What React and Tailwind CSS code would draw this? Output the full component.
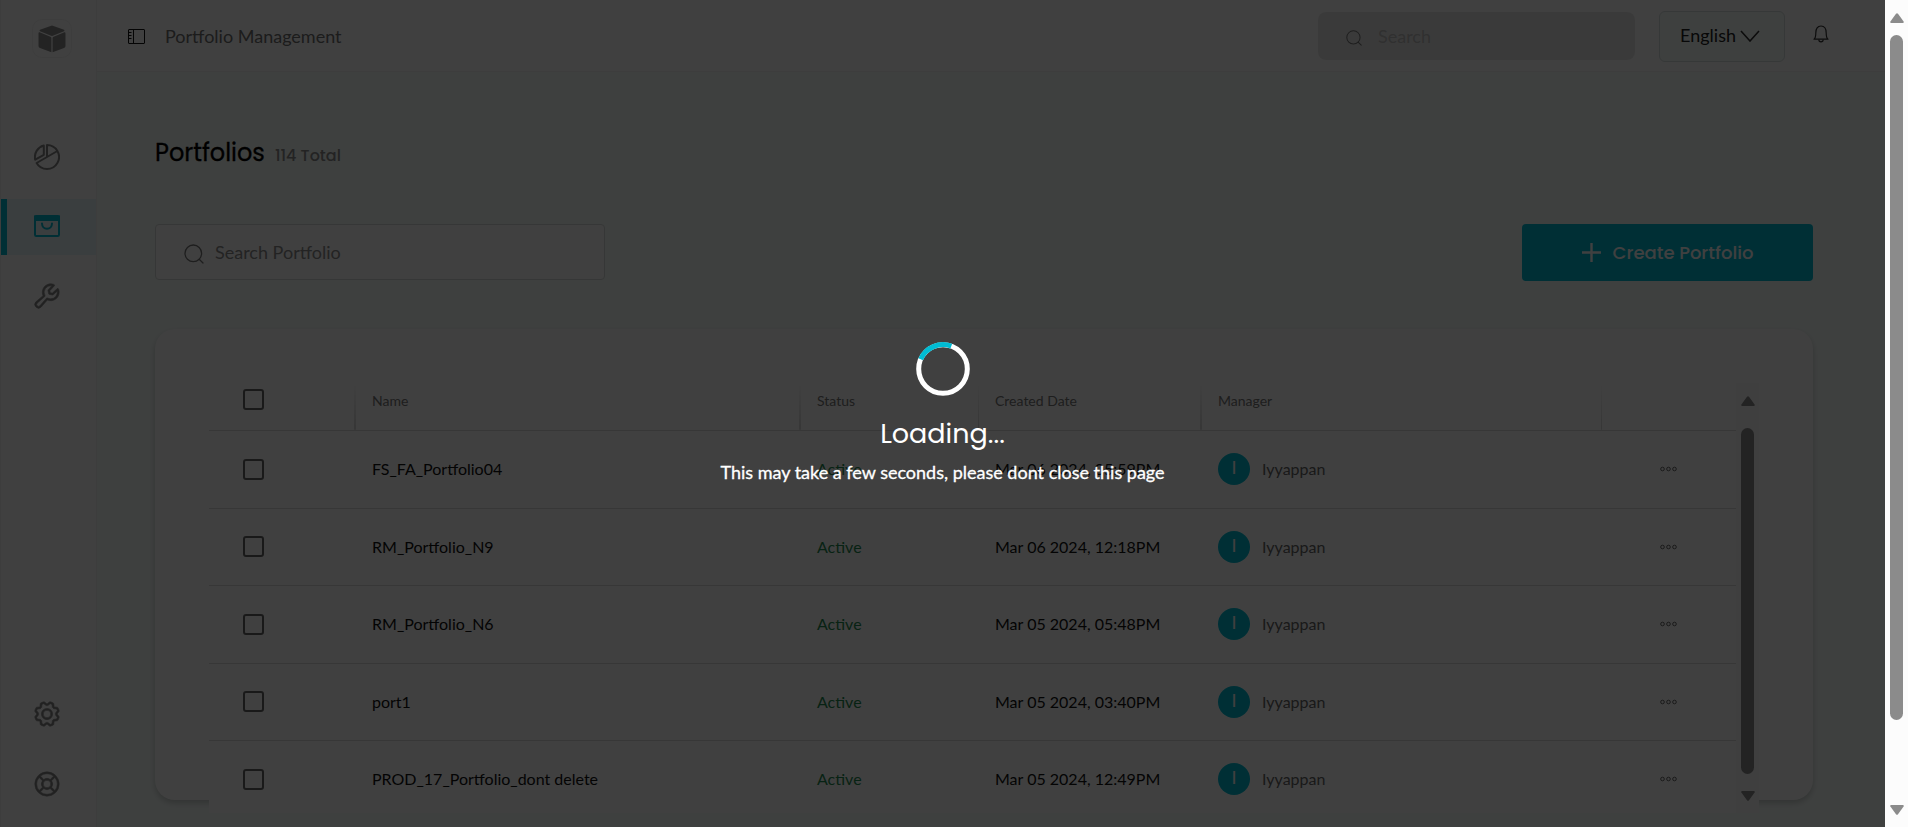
import React from "react";
import { PiWrench, PiGear, PiLifebuoy } from "react-icons/pi";

const rows = [
  { name: "FS_FA_Portfolio04", date: "Mar 06 2024, 05:59PM" },
  { name: "RM_Portfolio_N9", date: "Mar 06 2024, 12:18PM" },
  { name: "RM_Portfolio_N6", date: "Mar 05 2024, 05:48PM" },
  { name: "port1", date: "Mar 05 2024, 03:40PM" },
  { name: "PROD_17_Portfolio_dont delete", date: "Mar 05 2024, 12:49PM" },
];

function CubeLogo() {
  return (
    <svg viewBox="0 0 28 28" className="size-7" fill="#8c8c8c" aria-hidden="true">
      <path d="M14 .6 L26 4.800 Q27 5.500 26 6.300 L14.800 10.800 Q14 11.100 13.200 10.800 L2 6.300 Q1 5.500 2 4.800 Z" />
      <path d="M1.600 7.300 L12.400 11.700 Q13.400 12.100 13.400 13 V27.200 L2 23 Q.5 22.400 .5 21 V8.400 Q.5 7 1.600 7.300 Z" />
      <path d="M26.400 7.300 L15.600 11.700 Q14.600 12.100 14.600 13 V27.200 L26 23 Q27.500 22.400 27.500 21 V8.400 Q27.500 7 26.400 7.300 Z" />
    </svg>
  );
}

function PieIcon() {
  return (
    <svg viewBox="0 0 26 26" className="mt-[2px] size-[26px]" fill="none" stroke="currentColor" strokeWidth="2" strokeLinejoin="round" strokeLinecap="round" aria-hidden="true">
      <path d="M13 13V1A12 12 0 1 1 2.600 19L23.400 7" />
      <path d="M9.800 10.800V1.500A12 12 0 0 0 1.200 15.700Z" />
    </svg>
  );
}

function PortfolioIcon() {
  return (
    <svg viewBox="0 0 26 22" className="h-[22px] w-[26px]" fill="none" stroke="#00bcd4" strokeWidth="2" aria-hidden="true">
      <rect x="1" y="1" width="24" height="20" rx="1.2" />
      <path d="M1 1.5h24V5H1z" fill="#00bcd4" />
      <path d="M8 8.600a5 5.200 0 0 0 10 0" strokeLinecap="round" />
    </svg>
  );
}

function PanelIcon() {
  return (
    <svg viewBox="0 0 17 15" className="h-[15px] w-[17px]" fill="none" stroke="#111" aria-hidden="true">
      <rect x=".5" y=".5" width="16" height="14" rx=".5" />
      <path d="M5.500 .5v14M1 3.500h2.500M1 6.500h2.500M1 9.500h2.500" />
    </svg>
  );
}

function SearchIcon({ className }) {
  return (
    <svg viewBox="0 0 20 20" className={className} fill="none" stroke="currentColor" strokeWidth="1.3" strokeLinecap="round" aria-hidden="true">
      <circle cx="9.300" cy="9.300" r="8.300" />
      <path d="M15.200 15.200 L19 19" />
    </svg>
  );
}

function BellIcon() {
  return (
    <svg viewBox="0 0 16 18" className="h-[18px] w-4" fill="none" stroke="#333" strokeWidth="1.2" strokeLinejoin="round" aria-hidden="true">
      <path d="M1 14.200c1.600-1.200 1.800-3 1.800-6.200C2.800 4 4.600 1 8 1s5.200 3 5.200 7c0 3.200.2 5 1.800 6.200z" />
      <path d="M5.800 14.400a2.200 2.400 0 0 0 4.400 0" />
    </svg>
  );
}

function Dots() {
  return (
    <svg viewBox="0 0 17 6" className="h-[6px] w-[17px]" fill="none" stroke="#666" aria-hidden="true">
      <circle cx="2.500" cy="3" r="1.800" />
      <circle cx="8.500" cy="3" r="1.800" />
      <circle cx="14.500" cy="3" r="1.800" />
    </svg>
  );
}

function Arrow({ down }) {
  return (
    <svg viewBox="0 0 14 10" className={"h-[10px] w-[14px] shrink-0" + (down ? " rotate-180" : "")} fill="#8b8b8b" aria-hidden="true">
      <path d="M6 .8Q7 -.4 8 .8L13.600 8.400Q14.200 10 12.800 10H1.200Q-.2 10 .4 8.400Z" />
    </svg>
  );
}

function Checkbox({ label }) {
  return (
    <input
      type="checkbox"
      aria-label={label}
      className="block size-[21px] appearance-none rounded-[3px] border-2 border-[#666] bg-white"
    />
  );
}

function NavLink({ label, active, children }) {
  return (
    <a
      href="#"
      aria-label={label}
      className={
        "flex h-14 items-center border-l-[6px] pb-[2px] pl-[27px] text-[#858585] " +
        (active ? "border-[#00bcd4] bg-[#e6f5f9]" : "border-transparent")
      }
    >
      {children}
    </a>
  );
}

function Sidebar() {
  return (
    <nav className="flex w-[97px] shrink-0 flex-col border-x border-[#f2f2f2] bg-white pb-[14px] pt-[19px]">
      <a href="#" aria-label="Home" className="ml-[31px] flex h-[39px] w-10 items-center justify-center rounded-[10px] border border-[#f4f4f4]">
        <CubeLogo />
      </a>
      <div className="mt-[71px] flex flex-col gap-[14px]">
        <NavLink label="Dashboard"><PieIcon /></NavLink>
        <NavLink label="Portfolios" active><PortfolioIcon /></NavLink>
        <NavLink label="Tools"><PiWrench size={30} strokeWidth={5} className="-ml-[2px]" /></NavLink>
      </div>
      <div className="mt-auto flex flex-col gap-[14px]">
        <NavLink label="Settings"><PiGear size={30} strokeWidth={5} className="-ml-[2px]" /></NavLink>
        <NavLink label="Support"><PiLifebuoy size={30} strokeWidth={5} className="-ml-[2px]" /></NavLink>
      </div>
    </nav>
  );
}

function Header() {
  return (
    <header className="flex h-[72px] shrink-0 items-center border-b border-[#f2f2f2] bg-white pl-[31px] pr-14">
      <button type="button" aria-label="Toggle sidebar" className="mt-[2px]"><PanelIcon /></button>
      <span className="ml-5 text-lg text-[#707070]">Portfolio Management</span>
      <label className="ml-auto flex h-12 w-[317px] items-center rounded-lg bg-[#e8e8e8] pl-7">
        <SearchIcon className="mt-1 size-4 text-[#777]" />
        <input
          type="text"
          aria-label="Search"
          placeholder="Search"
          className="ml-4 w-48 bg-transparent text-lg outline-none placeholder:text-[#bebebe]"
        />
      </label>
      <button type="button" className="ml-6 mt-px flex h-[51px] w-[126px] items-center justify-center gap-1 rounded-md border border-[#d5dedd] bg-[#f8fffc] pb-[3px] pr-1 text-lg text-[#222]">
        English
        <svg viewBox="0 0 20 12" className="mt-[3px] h-3 w-5" fill="none" stroke="#333" strokeWidth="1.600" aria-hidden="true">
          <path d="M1 1 L10 11 L19 1" />
        </svg>
      </button>
      <button type="button" aria-label="Notifications" className="mb-1 ml-7"><BellIcon /></button>
    </header>
  );
}

const divider = "bg-[linear-gradient(to_bottom,#fff,#d8d8d8)] bg-right bg-no-repeat";
const headCell = "pb-[10px] pl-4 text-left text-sm font-normal text-[#777]";

function PortfolioTable() {
  return (
    <table className="w-full table-fixed border-collapse bg-white">
      <colgroup>
        <col className="w-[147px]" />
        <col />
        <col className="w-[178px]" />
        <col className="w-[223px]" />
        <col className="w-[400px]" />
        <col className="w-[134px]" />
      </colgroup>
      <thead>
        <tr className="h-[47px] border-b border-[#dcdcdc]">
          <th className={divider + " bg-[length:2px_100%] pb-[13px] pl-[34px]"}>
            <Checkbox label="Select all portfolios" />
          </th>
          <th className={divider + " bg-[length:2px_100%] " + headCell}>Name</th>
          <th className={divider + " bg-[length:1px_100%] " + headCell}>Status</th>
          <th className={divider + " bg-[length:2px_100%] " + headCell}>Created Date</th>
          <th className={divider + " bg-[length:1px_100%] " + headCell}>Manager</th>
          <th aria-label="Actions" />
        </tr>
      </thead>
      <tbody>
        {rows.map((r) => (
          <tr key={r.name} className="h-[78px] border-b border-[#dcdcdc] text-base text-[#111] even:h-[77px]">
            <td className="pl-[34px]"><Checkbox label={"Select " + r.name} /></td>
            <td className="pl-4">{r.name}</td>
            <td className="pl-4 text-[#1f8a4f]">Active</td>
            <td className="pl-4">{r.date}</td>
            <td className="pl-4">
              <div className="flex items-center gap-3 text-[#666]">
                <span className="flex size-8 items-center justify-center rounded-full bg-[#00bcd4] pb-1 text-lg text-white">I</span>
                Iyyappan
              </div>
            </td>
            <td className="pl-[58px]">
              <button type="button" aria-label={"Actions for " + r.name} className="block"><Dots /></button>
            </td>
          </tr>
        ))}
      </tbody>
    </table>
  );
}

function LoadingOverlay() {
  return (
    <div role="status" className="absolute inset-0 flex flex-col items-center bg-black/75 pt-[342px] text-white">
      <svg viewBox="0 0 54 54" className="size-[54px]" fill="none" strokeWidth="5" aria-hidden="true">
        <circle cx="27" cy="27" r="24.300" stroke="#fff" />
        <path d="M4.700 17.300A24.300 24.300 0 0 1 35.300 4.100" stroke="#00bcd4" />
      </svg>
      <p className="mt-5 font-[Poppins,Inter,sans-serif] text-[27px] leading-9">Loading...</p>
      <p className="mt-2 text-lg leading-6 [-webkit-text-stroke:0.3px_white]">This may take a few seconds, please dont close this page</p>
    </div>
  );
}

export default function App() {
  return (
    <div className="flex h-screen overflow-hidden font-[Lato,sans-serif]">
      <div className="relative flex min-w-0 flex-1">
        <Sidebar />
        <div className="flex min-w-0 flex-1 flex-col bg-[#f8fffc]">
          <Header />
          <main className="flex min-h-0 flex-1 flex-col pb-[27px] pl-[58px] pr-[72px] pt-[65px]">
            <div className="flex h-8 items-baseline gap-[10px] font-[Poppins,Inter,sans-serif]">
              <h1 className="text-2xl leading-8 text-black [-webkit-text-stroke:0.3px_black]">Portfolios</h1>
              <span className="text-base font-medium text-[#8c8c8c]">114 Total</span>
            </div>
            <div className="mt-[55px] flex items-start justify-between">
              <label className="flex h-14 w-[450px] items-center rounded border border-[#d5dbda] bg-white pl-7">
                <SearchIcon className="mt-1 size-5 text-[#777]" />
                <input
                  type="text"
                  aria-label="Search Portfolio"
                  placeholder="Search Portfolio"
                  className="ml-[11px] w-80 bg-transparent text-lg outline-none placeholder:text-[#8c8c8c]"
                />
              </label>
              <button type="button" className="flex h-[57px] w-[291px] items-center justify-center gap-3 rounded bg-[#00bcd4] font-[Poppins,Inter,sans-serif] text-lg font-medium text-white">
                <svg viewBox="0 0 19 19" className="size-[19px]" stroke="#fff" strokeWidth="2.400" aria-hidden="true">
                  <path d="M9.500 0v19M0 9.500h19" />
                </svg>
                Create Portfolio
              </button>
            </div>
            <section className="mt-12 flex min-h-0 flex-1 flex-col rounded-[20px] bg-white px-[54px] pt-[54px] shadow-[0_3px_6px_rgba(0,0,0,0.2)]">
              <div className="-mb-[13px] flex min-h-0 flex-1 bg-white">
                <div className="min-w-0 flex-1 overflow-hidden">
                  <PortfolioTable />
                </div>
                <div className="flex w-[23px] shrink-0 flex-col items-center bg-[#fcfcfc] pb-3 pt-[13px]">
                  <Arrow />
                  <div className="mb-[17px] mt-[22px] w-[13px] flex-1 rounded-full bg-[#8b8b8b]" />
                  <Arrow down />
                </div>
              </div>
            </section>
          </main>
        </div>
        <LoadingOverlay />
      </div>
      <div className="flex w-[23px] shrink-0 flex-col items-center bg-[#fcfcfc] pb-3 pt-[13px]">
        <Arrow />
        <div className="mb-[85px] mt-3 w-[13px] flex-1 rounded-full bg-[#8b8b8b]" />
        <Arrow down />
      </div>
    </div>
  );
}
